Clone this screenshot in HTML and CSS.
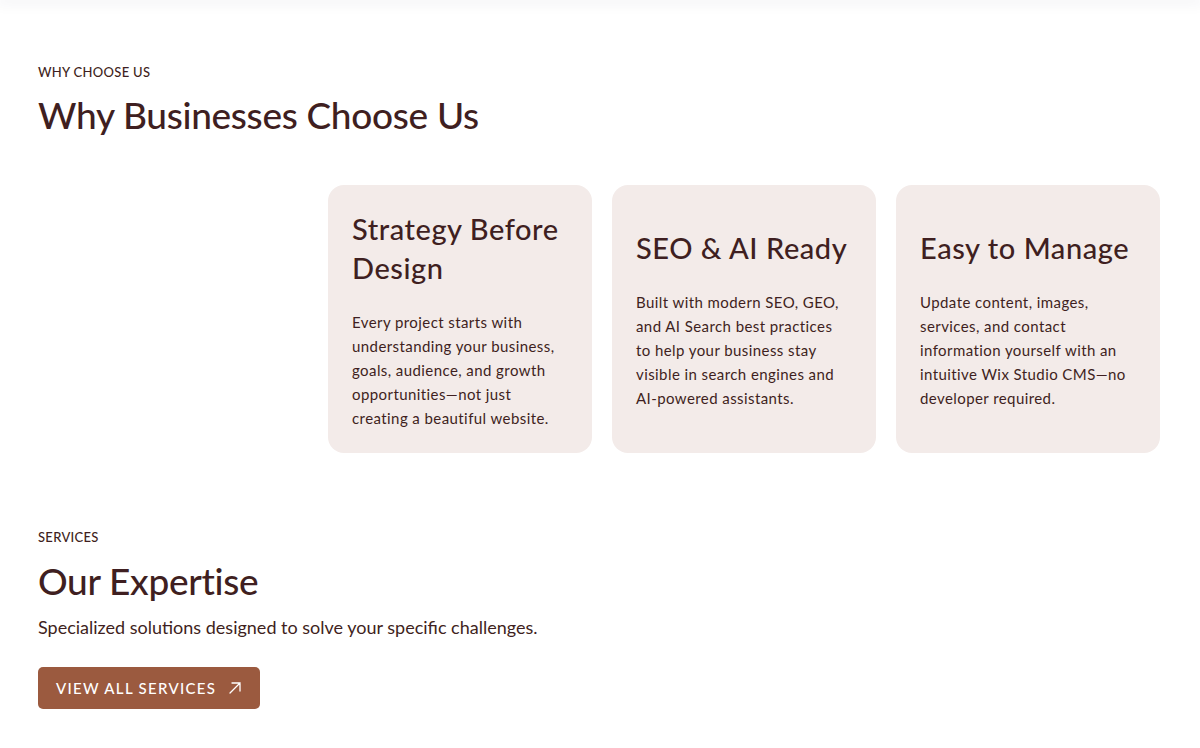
FILE: index.html
```html
<!DOCTYPE html>
<html lang="en">
<head>
<meta charset="utf-8">
<title>Why Choose Us</title>
<link rel="stylesheet" href="styles.css">
</head>
<body>
<div class="topbar"></div>
<main class="page">
  <section class="why">
    <p class="eyebrow">WHY CHOOSE US</p>
    <h2 class="title">Why Businesses Choose Us</h2>
    <div class="cards">
      <article class="card">
        <h3 class="card-title">Strategy Before Design</h3>
        <p class="card-text">Every project starts with understanding your business, goals, audience, and growth opportunities—not just creating a beautiful website.</p>
      </article>
      <article class="card">
        <h3 class="card-title">SEO &amp; AI Ready</h3>
        <p class="card-text">Built with modern SEO, GEO, and AI Search best practices to help your business stay visible in search engines and AI-powered assistants.</p>
      </article>
      <article class="card">
        <h3 class="card-title">Easy to Manage</h3>
        <p class="card-text">Update content, images, services, and contact information yourself with an intuitive Wix Studio CMS—no developer required.</p>
      </article>
    </div>
  </section>
  <section class="services">
    <p class="eyebrow">SERVICES</p>
    <h2 class="title">Our Expertise</h2>
    <p class="lead">Specialized solutions designed to solve your specific challenges.</p>
    <a class="btn" href="#">VIEW ALL SERVICES
      <svg class="arrow" width="14" height="14" viewBox="0 0 14 14" fill="none" stroke="currentColor" stroke-width="1.3" stroke-linecap="round"><path d="M2 12L12 2M4 2h8v8"/></svg>
    </a>
  </section>
</main>
</body>
</html>
```
FILE: styles.css
```css
* { box-sizing: border-box; }
html, body { margin: 0; padding: 0; background: #ffffff; }
body {
  font-family: "Lato", "Inter", sans-serif;
  color: #3f1f21;
  width: 1200px;
  height: 748px;
  overflow: hidden;
}
.topbar {
  height: 0;
  box-shadow: 0 0 14px 4px rgba(30, 30, 60, 0.06);
}
.page {
  padding: 0 40px 0 38px;
}
.why { padding-top: 64px; }
.eyebrow {
  margin: 0;
  font-size: 13px;
  line-height: 16px;
  font-weight: 500;
  letter-spacing: 0.3px;
}
.title {
  margin: 13px 0 0;
  font-size: 37px;
  line-height: 44px;
  font-weight: 500;
  letter-spacing: -0.3px;
}
.cards {
  display: flex;
  justify-content: flex-end;
  gap: 20px;
  margin-top: 48px;
}
.card {
  width: 264px;
  height: 268px;
  background: #f3ebe9;
  border-radius: 16px;
  padding: 24px 22px 24px 24px;
  display: flex;
  flex-direction: column;
  justify-content: center;
}
.card-title {
  margin: 0;
  font-size: 29px;
  line-height: 39px;
  font-weight: 500;
  letter-spacing: 0.55px;
}
.card-text {
  margin: 23px 0 0;
  max-width: 210px;
  font-size: 15px;
  line-height: 24px;
  font-weight: 400;
  letter-spacing: 0.42px;
}
.services { padding-top: 76px; }
.services .title { margin-top: 14px; }
.lead {
  margin: 11px 0 0;
  font-size: 18px;
  line-height: 26px;
}
.btn {
  display: inline-flex;
  align-items: center;
  gap: 12px;
  margin-top: 27px;
  height: 42px;
  padding: 0 18px;
  background: #9b5a3f;
  color: #ffffff;
  border-radius: 5px;
  text-decoration: none;
  font-size: 15px;
  font-weight: 500;
  letter-spacing: 1.3px;
}
.arrow { display: block; }
```
